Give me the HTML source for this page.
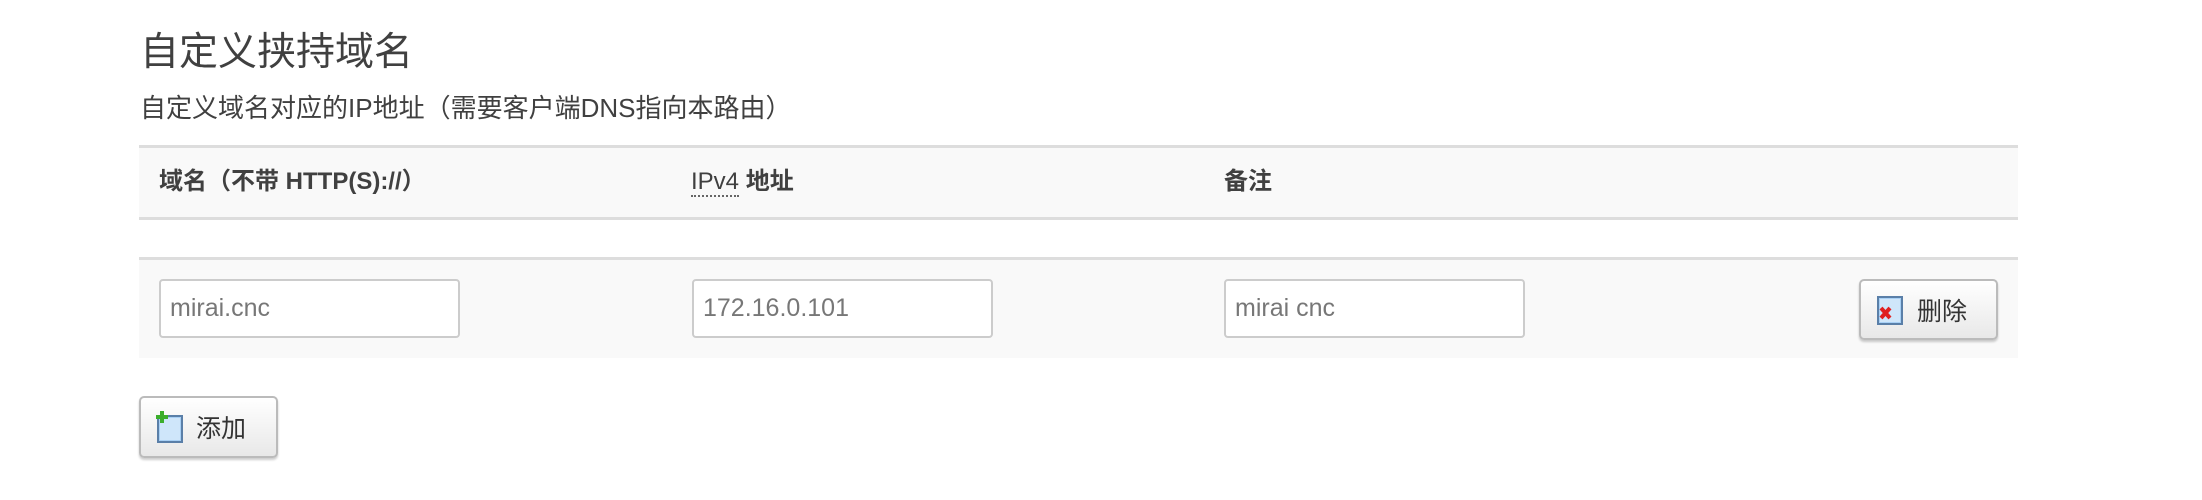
<!DOCTYPE html>
<html><head><meta charset="utf-8"><style>
*{box-sizing:border-box;margin:0;padding:0}
body{width:2202px;height:500px;background:#fff;position:relative;font-family:"Liberation Sans","Noto Sans CJK SC",sans-serif;color:#404040;overflow:hidden}
.a{position:absolute}
h1{position:absolute;left:140px;top:28px;font-size:39px;font-weight:normal;color:#404040;line-height:50px}
.sub{left:140px;top:92px;font-size:26px;line-height:32px;color:#404040}
.hdr{left:139px;top:145px;width:1879px;height:75px;background:#f9f9f9;border-top:3px solid #ddd;border-bottom:3px solid #ddd}
.th{top:166px;font-size:24px;font-weight:bold;color:#404040;line-height:32px}
.row{left:139px;top:257px;width:1879px;height:101px;background:#f9f9f9;border-top:3px solid #ddd}
.inp{top:279px;width:301px;height:59px;border:2px solid #ccc;border-radius:4px;background:#fff;font-size:25px;color:#777;padding-left:9px;line-height:55px}
.btn{border:2px solid #bbb;border-radius:5px;background:linear-gradient(#fff,#e8e8e8);box-shadow:0 2px 2px rgba(0,0,0,.2);font-size:25px;color:#333;display:flex;align-items:center}
.ipv4{border-bottom:2px dotted #666;font-weight:normal}
</style></head><body>
<h1>自定义挟持域名</h1>
<div class="a sub">自定义域名对应的IP地址（需要客户端DNS指向本路由）</div>
<div class="a hdr"></div>
<div class="a th" style="left:159px">域名（不带 HTTP(S)://）</div>
<div class="a th" style="left:691px"><span class="ipv4">IPv4</span> 地址</div>
<div class="a th" style="left:1224px">备注</div>
<div class="a row"></div>
<div class="a inp" style="left:159px">mirai.cnc</div>
<div class="a inp" style="left:692px">172.16.0.101</div>
<div class="a inp" style="left:1224px">mirai cnc</div>
<div class="a btn" style="left:1859px;top:279px;width:139px;height:61px;padding-left:14px">
<svg width="30" height="32" viewBox="0 0 30 32"><rect x="3" y="3" width="24" height="27" fill="#a8d0f5" stroke="#5a7fa8" stroke-width="2"/><rect x="5" y="5" width="20" height="23" fill="#cfe6fa"/><path d="M6 14l9 10M15 14l-9 10" stroke="#e02020" stroke-width="4"/></svg>
<span style="margin-left:12px">删除</span></div>
<div class="a btn" style="left:139px;top:396px;width:139px;height:62px;padding-left:13px">
<svg width="30" height="34" viewBox="0 0 30 34"><rect x="4" y="6" width="24" height="26" fill="#a8d0f5" stroke="#5a7fa8" stroke-width="2"/><rect x="6" y="8" width="20" height="22" fill="#cfe6fa"/><path d="M8 1v12M2 7h12" stroke="#3cae2c" stroke-width="4"/></svg>
<span style="margin-left:12px">添加</span></div>
</body></html>
